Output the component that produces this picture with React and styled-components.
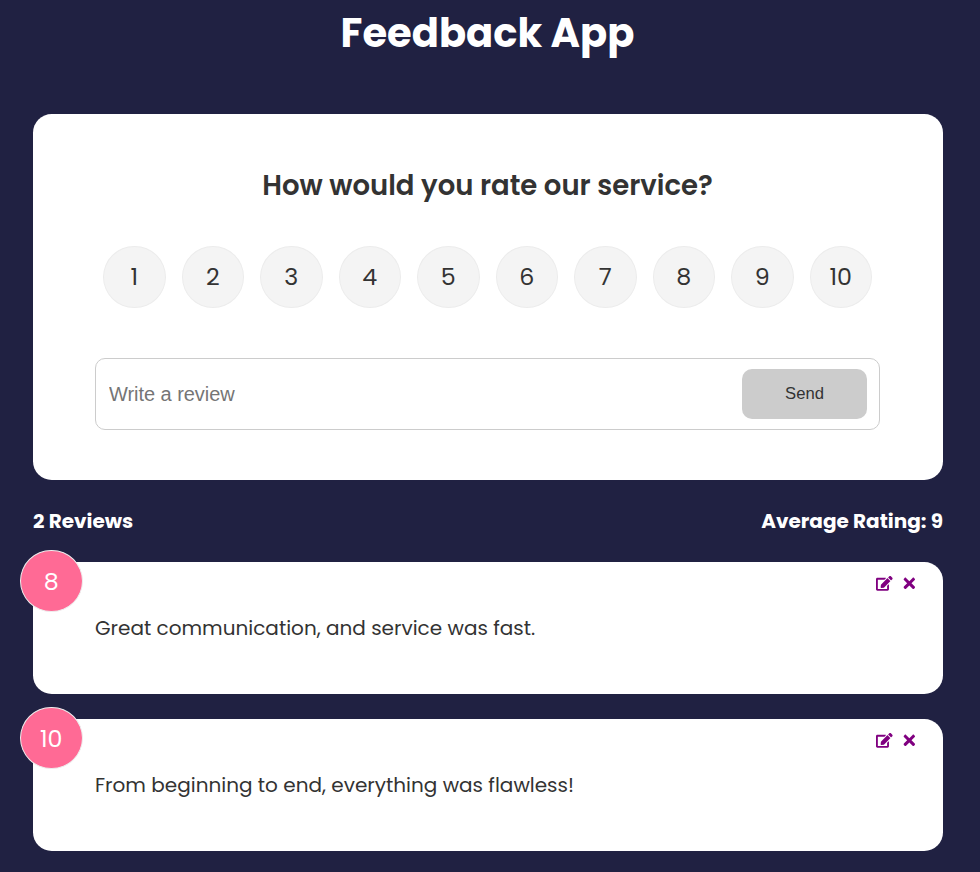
import React, { useState } from "react";
import styled, { createGlobalStyle } from "styled-components";
import { FaEdit, FaTimes } from "react-icons/fa";

const GlobalStyle = createGlobalStyle`
  *, *::before, *::after { box-sizing: border-box; }
  body {
    margin: 0;
    background: #202142;
    color: #333;
    font-family: Poppins, Inter, sans-serif;
  }
  h1, h2, h4, p, ul { margin: 0; padding: 0; }
`;

const Page = styled.div`
  height: 872px;
  overflow: hidden;
`;

const Header = styled.header`
  height: 114px;
  padding: 3px 5px 0 0;
  text-align: center;
`;

const Title = styled.h1`
  color: #fff;
  font-size: 40px;
  font-weight: 700;
  line-height: 60px;
`;

const Container = styled.main`
  width: 910px;
  margin-left: 33px;
`;

const Card = styled.section`
  position: relative;
  height: ${(p) => p.$height}px;
  padding: 50px 63px 0 62px;
  margin-bottom: 25px;
  border-radius: 18.75px;
  background: #fff;
`;

const Question = styled.h2`
  font-size: 27.5px;
  font-weight: 600;
  line-height: 43px;
  text-align: center;
`;

const RatingList = styled.ul`
  display: flex;
  justify-content: space-around;
  margin: 39px 0 50px;
  list-style: none;
`;

const Circle = styled.div`
  width: 62.5px;
  height: 62px;
  border: 1px solid #ececec;
  border-radius: 50%;
  background: #f4f4f4;
  font-size: 23.75px;
  font-weight: 400;
  line-height: 59px;
  text-align: center;
`;

const ScoreBadge = styled(Circle)`
  position: absolute;
  top: -12px;
  left: -13px;
  border-color: #eee;
  background: #ff6a95;
  color: #fff;
  line-height: 61px;
`;

const InputGroup = styled.form`
  display: flex;
  align-items: center;
  height: 72px;
  padding: 0 12px;
  border: 1px solid #ccc;
  border-radius: 10px;
`;

const ReviewInput = styled.input`
  flex: 1;
  min-width: 0;
  padding: 2px 1px;
  border: 0;
  outline: 0;
  background: transparent;
  font: 20px "Liberation Sans", Arial, sans-serif;
  letter-spacing: -0.05px;
  &::placeholder { color: #757575; }
`;

const SendButton = styled.button`
  width: 125px;
  height: 50px;
  padding: 0;
  border: 0;
  border-radius: 10px;
  background: #ccc;
  color: #333;
  font: 16.67px "Liberation Sans", Arial, sans-serif;
`;

const Stats = styled.div`
  display: flex;
  justify-content: space-between;
  height: 57px;
  color: #fff;
`;

const Stat = styled.h4`
  font-size: 20px;
  font-weight: 700;
  line-height: 32px;
`;

const ReviewText = styled.p`
  font-size: 20px;
  font-weight: 400;
  line-height: 33px;
`;

const Actions = styled.div`
  position: absolute;
  top: 13px;
  right: 25px;
  display: flex;
  gap: 8.4px;
`;

const IconButton = styled.button`
  display: flex;
  padding: 0;
  border: 0;
  background: none;
  color: purple;
  font-size: 16.67px;
`;

const scores = [1, 2, 3, 4, 5, 6, 7, 8, 9, 10];
const reviews = [
  { score: 8, text: "Great communication, and service was fast." },
  { score: 10, text: "From beginning to end, everything was flawless!" },
];

export default function App() {
  const [text, setText] = useState("");
  return (
    <Page>
      <GlobalStyle />
      <Header><Title>Feedback App</Title></Header>
      <Container>
        <Card $height={366}>
          <Question>How would you rate our service?</Question>
          <RatingList>
            {scores.map((n) => <Circle as="li" key={n}>{n}</Circle>)}
          </RatingList>
          <InputGroup onSubmit={(e) => e.preventDefault()}>
            <ReviewInput
              placeholder="Write a review"
              value={text}
              onChange={(e) => setText(e.target.value)}
            />
            <SendButton>Send</SendButton>
          </InputGroup>
        </Card>
        <Stats>
          <Stat>2 Reviews</Stat>
          <Stat>Average Rating: 9</Stat>
        </Stats>
        {reviews.map((r) => (
          <Card key={r.score} $height={132}>
            <ScoreBadge>{r.score}</ScoreBadge>
            <Actions>
              <IconButton aria-label="Edit"><FaEdit /></IconButton>
              <IconButton aria-label="Delete"><FaTimes /></IconButton>
            </Actions>
            <ReviewText>{r.text}</ReviewText>
          </Card>
        ))}
      </Container>
    </Page>
  );
}
